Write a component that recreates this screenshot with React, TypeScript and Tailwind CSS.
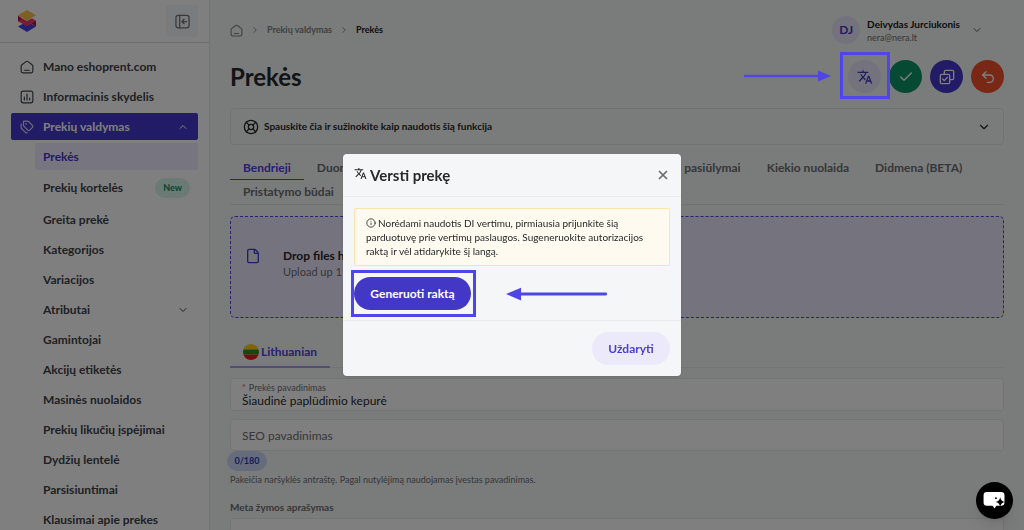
import type { ReactNode } from "react";
import {
  Check,
  ChevronDown,
  ChevronRight,
  ChevronUp,
  File,
  Info,
  LifeBuoy,
  Tags,
  Undo2,
  X,
} from "lucide-react";
import { MdTranslate } from "react-icons/md";

const subItems = [
  "Greita prekė",
  "Kategorijos",
  "Variacijos",
  "Atributai",
  "Gamintojai",
  "Akcijų etiketės",
  "Masinės nuolaidos",
  "Prekių likučių įspėjimai",
  "Dydžių lentelė",
  "Parsisiuntimai",
  "Klausimai apie prekes",
];

const tabs = [
  "Bendrieji",
  "Duomenys",
  "Nuotraukos",
  "Parinktys",
  "Galerija",
  "Specialūs pasiūlymai",
  "Kiekio nuolaida",
  "Didmena (BETA)",
  "Pristatymo būdai",
];

function StrokeIcon({
  className,
  children,
}: {
  className: string;
  children: ReactNode;
}) {
  return (
    <svg
      viewBox="0 0 24 24"
      fill="none"
      stroke="currentColor"
      strokeWidth="2"
      strokeLinecap="round"
      strokeLinejoin="round"
      className={className}
      aria-hidden="true"
    >
      {children}
    </svg>
  );
}

function HomeIcon({ className }: { className: string }) {
  return (
    <StrokeIcon className={className}>
      <path d="M2 10.5a3 3 0 0 1 1.300-2.400l7-5.300a3 3 0 0 1 3.400 0l7 5.300a3 3 0 0 1 1.300 2.400V19a3 3 0 0 1-3 3H5a3 3 0 0 1-3-3z" />
      <path d="M8 17.500h8" />
    </StrokeIcon>
  );
}

function ChartIcon({ className }: { className: string }) {
  return (
    <StrokeIcon className={className}>
      <rect x="2" y="2" width="20" height="20" rx="3.500" />
      <path d="M7.500 12v5M12 7v10M16.500 14v3" />
    </StrokeIcon>
  );
}

function CollapseIcon({ className }: { className: string }) {
  return (
    <StrokeIcon className={className}>
      <rect x="1.500" y="2" width="21" height="20" rx="3.500" />
      <path d="M7.500 2v20M18.500 12h-7M14.500 8.500 11 12l3.500 3.500" />
    </StrokeIcon>
  );
}

function CopyCheckIcon({ className }: { className: string }) {
  return (
    <StrokeIcon className={className}>
      <rect x="2" y="8" width="14" height="14" rx="2" />
      <path d="M8 8V4a2 2 0 0 1 2-2h10a2 2 0 0 1 2 2v10a2 2 0 0 1-2 2h-4" />
      <path d="m5.500 15 2.500 2.500 4.500-5" />
    </StrokeIcon>
  );
}

function Logo() {
  return (
    <svg viewBox="0 0 18 22" className="h-[22px] w-[18px]" aria-hidden="true">
      <path d="M0 16.500 9 11.500l9 5L9 22z" fill="#4a3fe0" />
      <path d="M0 5.500v6l5-2z" fill="#a81442" />
      <path d="M18 10.500v6l-5-3z" fill="#a81442" />
      <path d="M0 6l9 5 5-2.700 4 2.500-9 5.500-9-5 4-2.300z" fill="#ef3b66" />
      <path d="M0 5.300 9 0l9 5.300-9 5.200z" fill="#fbbf45" />
    </svg>
  );
}

function Sidebar() {
  return (
    <aside className="w-[210px] shrink-0 border-r border-[#e3e8e8] bg-white">
      <div className="flex h-[43px] items-center justify-between border-b border-[#d8dcdc] pl-[18px] pr-[11px]">
        <Logo />
        <button
          type="button"
          aria-label="Suskleisti meniu"
          className="flex size-8 items-center justify-center rounded-sm bg-[#f3f6f8] text-[#6f7275]"
        >
          <CollapseIcon className="size-[15px]" />
        </button>
      </div>
      <nav className="flex flex-col gap-[3px] px-[11px] pt-[10px] text-xs font-bold text-[#404247]">
        <a href="#" className="flex h-[27px] items-center gap-[9px] pl-[9px]">
          <HomeIcon className="size-[14px]" />
          Mano eshoprent.com
        </a>
        <a href="#" className="flex h-[27px] items-center gap-[9px] pl-[9px]">
          <ChartIcon className="size-[14px]" />
          Informacinis skydelis
        </a>
        <button
          type="button"
          aria-expanded="true"
          className="flex h-[27px] items-center gap-[9px] rounded-xs bg-[#4338ca] px-[9px] text-white"
        >
          <Tags className="size-[14px] text-white/80" />
          <span className="flex-1 text-left">Prekių valdymas</span>
          <ChevronUp className="size-3" />
        </button>
        <div className="flex flex-col gap-[3px] pl-6">
          <a
            href="#"
            className="flex h-[27px] items-center rounded-xs bg-[#efebff] pl-2 text-[#4338ca]"
          >
            Prekės
          </a>
          <a
            href="#"
            className="flex h-[30px] items-center justify-between px-2"
          >
            Prekių kortelės
            <span className="flex h-5 items-center rounded-full bg-[#d5f5e9] px-2 text-[9px] text-[#0b8a60]">
              New
            </span>
          </a>
          {subItems.map((item) => (
            <a
              key={item}
              href="#"
              className="flex h-[27px] items-center justify-between pl-2 pr-[9px]"
            >
              {item}
              {item === "Atributai" && <ChevronDown className="size-3" />}
            </a>
          ))}
        </div>
      </nav>
    </aside>
  );
}

function TopBar() {
  return (
    <header className="flex h-[60px] items-center justify-between pr-[21px]">
      <nav
        aria-label="Kelias"
        className="flex items-center gap-[7px] text-[9px] font-bold text-[#7d8083]"
      >
        <a href="#" aria-label="Pradžia">
          <HomeIcon className="size-[13px]" />
        </a>
        <ChevronRight className="size-2.5" />
        <a href="#">Prekių valdymas</a>
        <ChevronRight className="size-2.5" />
        <span className="text-[#17181b]">Prekės</span>
      </nav>
      <button type="button" className="flex items-center gap-[7px] text-left">
        <span className="flex size-7 items-center justify-center rounded-full bg-[#e9e5fb] text-xs font-bold text-[#4338ca]">
          DJ
        </span>
        <span className="flex flex-col">
          <span className="text-[10px] font-bold leading-[14px] text-[#17181b]">
            Deivydas Jurciukonis
          </span>
          <span className="text-[9px] leading-[13px] text-[#6b6e72]">
            nera@nera.lt
          </span>
        </span>
        <ChevronDown className="ml-1 size-3 text-[#55585c]" />
      </button>
    </header>
  );
}

function Actions() {
  return (
    <div className="flex gap-2">
      <div className="relative">
        <button
          type="button"
          aria-label="Versti"
          className="flex size-[33px] items-center justify-center rounded-full bg-[#e9e5fb] text-[#4338ca]"
        >
          <MdTranslate className="size-4" />
        </button>
        <div className="absolute -left-[8px] -top-[8px] z-20 h-[47px] w-[50px] border-[3px] border-[#5046e5]" />
        <Arrow className="absolute -left-[105px] top-[10px] z-20 h-3 w-[88px]" />
      </div>
      <button
        type="button"
        aria-label="Išsaugoti"
        className="flex size-[33px] items-center justify-center rounded-full bg-[#0f9467] text-white"
      >
        <Check className="size-4" />
      </button>
      <button
        type="button"
        aria-label="Kopijuoti"
        className="flex size-[33px] items-center justify-center rounded-full bg-[#4338ca] text-white"
      >
        <CopyCheckIcon className="size-4" />
      </button>
      <button
        type="button"
        aria-label="Atgal"
        className="flex size-[33px] items-center justify-center rounded-full bg-[#f4512c] text-white"
      >
        <Undo2 className="size-4" />
      </button>
    </div>
  );
}

function Arrow({ className }: { className: string }) {
  return (
    <svg viewBox="0 0 88 12" className={className} aria-hidden="true">
      <path
        d="M2 6h75"
        stroke="#5046e5"
        strokeWidth="2.500"
        strokeLinecap="round"
      />
      <path d="M75 0.500v11L88 6z" fill="#5046e5" />
    </svg>
  );
}

function LithuanianFlag() {
  return (
    <svg viewBox="0 0 16 16" className="size-4" aria-hidden="true">
      <clipPath id="flag-circle">
        <circle cx="8" cy="8" r="8" />
      </clipPath>
      <g clipPath="url(#flag-circle)">
        <path d="M0 0h16v5.500H0z" fill="#fdc913" />
        <path d="M0 5.500h16v5H0z" fill="#2f8f1c" />
        <path d="M0 10.500h16V16H0z" fill="#e01f1f" />
      </g>
    </svg>
  );
}

function ProductForm() {
  return (
    <form>
      <label className="mt-2.5 flex h-[33px] flex-col rounded-sm border border-[#e6eaea] bg-white px-[11px] pt-[3px]">
        <span className="text-[9px] leading-[11px] text-[#6b6e72]">
          <span className="mr-[3px] text-[#f4512c]">*</span>
          Prekės pavadinimas
        </span>
        <input
          type="text"
          defaultValue="Šiaudinė paplūdimio kepurė"
          className="h-[15px] w-full bg-transparent text-xs text-[#26282b] outline-none"
        />
      </label>
      <input
        type="text"
        aria-label="SEO pavadinimas"
        placeholder="SEO pavadinimas"
        className="mt-2 block h-8 w-full rounded-sm border border-[#e6eaea] bg-white px-[11px] text-xs outline-none placeholder:text-[#6b6e72]"
      />
      <span className="-ml-[3px] flex h-5 w-10 items-center justify-center rounded-full bg-[#cfd8fb] text-[9px] font-bold text-[#1f3fb8]">
        0/180
      </span>
      <p className="mt-[3px] text-[9px] leading-3 text-[#6b6e72]">
        Pakeičia naršyklės antraštę. Pagal nutylėjimą naudojamas įvestas
        pavadinimas.
      </p>
      <label
        htmlFor="meta"
        className="mt-[14px] block text-[10px] font-bold leading-[14px] text-[#6b6e72]"
      >
        Meta žymos aprašymas
      </label>
      <textarea
        id="meta"
        className="mt-1 block h-20 w-full resize-none rounded-sm border border-[#e6eaea] bg-white"
      />
    </form>
  );
}

function TranslateDialog() {
  return (
    <div className="fixed inset-0 z-10 flex items-center justify-center bg-black/50">
      <div
        role="dialog"
        aria-modal="true"
        aria-labelledby="dialog-title"
        className="w-[338px] rounded-[4px] bg-[#f5f6f8] shadow-sm"
      >
        <div className="flex h-[43px] items-center justify-between border-b border-[#e9ebed] px-[11px]">
          <h2
            id="dialog-title"
            className="flex items-center gap-[3px] text-[15px] font-bold text-[#26282b]"
          >
            <MdTranslate className="mb-1 size-[13px]" />
            Versti prekę
          </h2>
          <button type="button" aria-label="Uždaryti langą">
            <X className="size-[14px] text-[#6b6e72]" strokeWidth={3} />
          </button>
        </div>
        <div className="px-[11px] pb-2.5 pt-[11px]">
          <p className="rounded-xs border border-[#ffe3ac] bg-[#fffaf0] px-[11px] py-[7px] text-[10px] leading-[14px] text-[#26282b]">
            <Info className="mr-0.5 inline size-[10px] align-[-1px]" />
            Norėdami naudotis DI vertimu, pirmiausia prijunkite šią
            <br />
            parduotuvę prie vertimų paslaugos. Sugeneruokite autorizacijos
            raktą ir vėl atidarykite šį langą.
          </p>
          <div className="relative mt-[11px] flex">
            <button
              type="button"
              className="h-[33px] w-[117px] rounded-full bg-[#4338c6] text-xs font-bold text-white"
            >
              Generuoti raktą
            </button>
            <div className="absolute -left-[3px] -top-[7px] h-[47px] w-[125px] border-[3px] border-[#5046e5]" />
            <Arrow className="absolute left-[152px] top-[10px] h-[14px] w-[102px] rotate-180" />
          </div>
        </div>
        <div className="flex justify-end border-t border-[#e9ebed] p-[11px]">
          <button
            type="button"
            className="h-[33px] w-[78px] rounded-full bg-[#ece9fa] text-xs font-bold text-[#4a3fca]"
          >
            Uždaryti
          </button>
        </div>
      </div>
    </div>
  );
}

export default function App() {
  return (
    <div className="flex h-screen overflow-hidden bg-[#f4f7f6] font-['Lato',sans-serif]">
      <Sidebar />
      <main className="min-w-0 flex-1 px-5">
        <TopBar />
        <div className="flex items-center justify-between">
          <h1 className="text-2xl font-bold text-[#26282b]">Prekės</h1>
          <Actions />
        </div>
        <button
          type="button"
          className="mt-[15px] flex h-[37px] w-full items-center gap-[5px] rounded-[4px] border border-[#e2e6e6] px-3 text-[10px] font-bold text-[#26282b]"
        >
          <LifeBuoy className="size-4" />
          <span className="flex-1 text-left">
            Spauskite čia ir sužinokite kaip naudotis šią funkcija
          </span>
          <ChevronDown className="size-[14px]" />
        </button>
        <div
          role="tablist"
          className="mt-[11px] flex flex-wrap border-b border-[#e2e6e6] text-xs font-bold text-[#6b6e72]"
        >
          {tabs.map((tab, index) => (
            <button
              key={tab}
              type="button"
              role="tab"
              aria-selected={index === 0}
              className={
                index === 0
                  ? "h-6 border-b border-[#4f46e5] px-[13px] text-[#4f3fe0]"
                  : "h-6 px-[13px]"
              }
            >
              {tab}
            </button>
          ))}
        </div>
        <button
          type="button"
          className="mt-[11px] flex h-[102px] w-full gap-[22px] rounded-[5px] border border-dashed border-[#4f46e5] bg-[#ebe7fb] pl-[14px] pt-[31px] text-left"
        >
          <File className="size-4 text-[#4338ca]" />
          <span className="flex flex-col">
            <span className="text-xs font-bold leading-4 text-[#26282b]">
              Drop files here
            </span>
            <span className="text-[11px] leading-[15px] text-[#6b6e72]">
              Upload up 1 file
            </span>
          </span>
        </button>
        <div role="tablist" className="mt-5 flex border-b border-[#e6eaea]">
          <button
            type="button"
            role="tab"
            aria-selected="true"
            className="-mb-px flex h-[30px] items-center gap-0.5 border-b-2 border-[#a49be8] px-[13px] text-xs font-bold text-[#4f3fe0]"
          >
            <LithuanianFlag />
            Lithuanian
          </button>
        </div>
        <ProductForm />
      </main>
      <TranslateDialog />
      <button
        type="button"
        aria-label="Pokalbis"
        className="fixed bottom-[11px] right-[11px] z-20 flex size-[37px] items-center justify-center rounded-full bg-black shadow-lg"
      >
        <svg viewBox="0 0 24 20" className="h-[19px] w-[23px]" aria-hidden="true">
          <path
            d="M4 1h15a3.500 3.500 0 0 1 3.500 3.500V12a3.500 3.500 0 0 1-3.500 3.500h-5L12 18.500l-2-3H4A3.500 3.500 0 0 1 .5 12V4.500A3.500 3.500 0 0 1 4 1z"
            fill="white"
          />
          <path
            d="M18 6.500q.7 4.300 5 5-4.300.7-5 5-.7-4.300-5-5 4.300-.7 5-5z"
            fill="black"
          />
          <circle cx="13.500" cy="7.500" r="1" fill="black" />
        </svg>
      </button>
    </div>
  );
}
